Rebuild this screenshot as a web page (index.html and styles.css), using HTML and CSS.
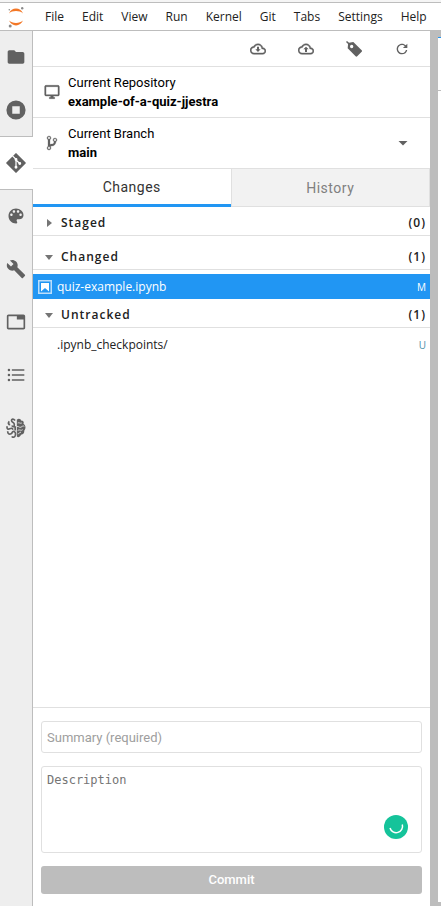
FILE: index.html
```html
<!DOCTYPE html>
<html lang="en">
<head>
<meta charset="utf-8">
<meta name="viewport" content="width=device-width, initial-scale=1">
<title>JupyterLab</title>
<link rel="stylesheet" href="styles.css">
</head>
<body>
<header class="menubar">
  <svg class="logo" viewBox="0 0 18 22" aria-hidden="true">
    <path fill="#f37726" d="M2 7.400C3.300 4.300 6 2.500 9 2.500s5.700 1.800 7 4.900C14.300 5.800 11.800 5 9 5s-5.300.8-7 2.400zM2 14.600C3.300 17.700 6 19.500 9 19.500s5.700-1.800 7-4.900c-1.700 1.600-4.200 2.400-7 2.400s-5.300-.8-7-2.400z"/>
    <g fill="#8a8a8a"><circle cx="15.200" cy="2.300" r="1.200"/><circle cx="2.300" cy="3.700" r="0.800"/><circle cx="3.200" cy="20" r="1.500"/></g>
  </svg>
  <nav class="menus" aria-label="Main menu">
    <button>File</button><button>Edit</button><button>View</button><button>Run</button><button>Kernel</button><button>Git</button><button>Tabs</button><button>Settings</button><button>Help</button>
  </nav>
</header>
<div class="workspace">
  <aside class="rail" aria-label="Side bar">
    <button class="rail-tab" aria-label="File browser"><svg viewBox="0 0 24 24"><path d="M10 4H4c-1.100 0-1.990.9-1.990 2L2 18c0 1.100.9 2 2 2h16c1.100 0 2-.9 2-2V8c0-1.100-.9-2-2-2h-8l-2-2z"/></svg></button>
    <button class="rail-tab" aria-label="Running sessions"><svg viewBox="0 0 24 24"><path fill-rule="evenodd" d="M12 0.500a11.500 11.500 0 1 0 0 23 11.500 11.500 0 0 0 0-23zM7.500 7.500h9v9h-9z"/></svg></button>
    <button class="rail-tab active" aria-label="Git"><svg viewBox="0 0 24 24"><path d="M12 1.200 22.800 12 12 22.800 1.200 12z" stroke="#616161" stroke-width="2" stroke-linejoin="round"/><g class="cut"><path d="M7.800 3.500 12 7.500V17M12 8.500l4.500 4"/><circle cx="12" cy="7.800" r="1"/><circle cx="12" cy="17" r="1"/><circle cx="16.500" cy="12.500" r="1"/></g></svg></button>
    <button class="rail-tab" aria-label="Commands"><svg viewBox="0 0 24 24"><path d="M12 3c-4.970 0-9 4.030-9 9s4.030 9 9 9c.83 0 1.500-.67 1.500-1.500 0-.39-.15-.74-.39-1.010-.23-.26-.38-.61-.38-.99 0-.83.67-1.500 1.500-1.500H16c2.760 0 5-2.240 5-5 0-4.420-4.030-8-9-8zm-5.500 9c-.83 0-1.500-.67-1.500-1.500S5.670 9 6.500 9 8 9.670 8 10.500 7.330 12 6.500 12zm3-4C8.670 8 8 7.330 8 6.500S8.670 5 9.500 5s1.500.67 1.500 1.500S10.330 8 9.500 8zm5 0c-.83 0-1.500-.67-1.500-1.500S13.670 5 14.500 5s1.500.67 1.500 1.500S15.330 8 14.500 8zm3 4c-.83 0-1.500-.67-1.500-1.500S16.670 9 17.500 9s1.500.67 1.500 1.500-.67 1.500-1.500 1.500z"/></svg></button>
    <button class="rail-tab" aria-label="Property inspector"><svg viewBox="0 0 24 24"><path d="M22.700 19l-9.100-9.100c.9-2.300.4-5-1.500-6.900-2-2-5-2.400-7.400-1.300L9 6 6 9 1.600 4.700C.4 7.100.9 10.100 2.900 12.100c1.900 1.900 4.600 2.400 6.900 1.500l9.100 9.100c.4.4 1 .4 1.400 0l2.300-2.300c.5-.4.5-1.100.1-1.400z"/></svg></button>
    <button class="rail-tab" aria-label="Open tabs"><svg viewBox="0 0 24 24"><path d="M21 3H3c-1.100 0-2 .9-2 2v14c0 1.100.9 2 2 2h18c1.100 0 2-.9 2-2V5c0-1.100-.9-2-2-2zm0 16H3V5h10v4h8v10z"/></svg></button>
    <button class="rail-tab" aria-label="Table of contents"><svg viewBox="0 0 24 24"><path d="M7 5h15v2H7zM7 11h15v2H7zM7 17h15v2H7z"/><circle cx="3.500" cy="6" r="1.500"/><circle cx="3.500" cy="12" r="1.500"/><circle cx="3.500" cy="18" r="1.500"/></svg></button>
    <button class="rail-tab" aria-label="Extension"><svg viewBox="0 0 24 24"><path d="M13 2c2-2 5-1 5 1 3 0 4 2 3 4 3 2 3 6 1 8 0 3-1 5-4 5-1 3-4 4-5 2z"/><g class="fold"><path d="M11 3C8 0 6 2 7 4s3 1 3 4-2 3-3 1M4 4C2 6 3 8 5 8M1.500 10c-1 3 1 4 3 3s3-1 4 1M2 16c0 3 2 4 4 3s1-3 3-3 3 3 2 5M7 22c1 2 4 1 4-1M11 10v5"/></g><g class="crease"><path d="M14 6c2-1 3 1 5 0M13 10c3 0 3 2 5 1s2-2 4-1M14 15c2-2 4 1 6-1M14 19c2 0 2-2 4-2"/></g></svg></button>
  </aside>
  <main class="git-panel">
    <div class="toolbar">
      <button aria-label="Pull latest changes"><svg viewBox="0 0 24 24"><path class="bold" d="M19.350 10.040C18.670 6.590 15.640 4 12 4 9.110 4 6.600 5.640 5.350 8.040 2.340 8.360 0 10.910 0 14c0 3.310 2.690 6 6 6h13c2.760 0 5-2.240 5-5 0-2.640-2.050-4.780-4.650-4.960zM19 18H6c-2.210 0-4-1.790-4-4 0-2.050 1.530-3.760 3.560-3.970l1.070-.11.5-.95C8.080 7.140 9.940 6 12 6c2.620 0 4.880 1.860 5.390 4.430l.3 1.500 1.530.11c1.560.1 2.780 1.410 2.780 2.960 0 1.650-1.350 3-3 3z"/><path d="M10.500 8.500h3v4H16l-4 4-4-4h2.500z"/></svg></button>
      <button aria-label="Push committed changes"><svg viewBox="0 0 24 24"><path class="bold" d="M19.350 10.040C18.670 6.590 15.640 4 12 4 9.110 4 6.600 5.640 5.350 8.040 2.340 8.360 0 10.910 0 14c0 3.310 2.690 6 6 6h13c2.760 0 5-2.240 5-5 0-2.640-2.050-4.780-4.650-4.960zM19 18H6c-2.210 0-4-1.790-4-4 0-2.050 1.530-3.760 3.560-3.970l1.070-.11.5-.95C8.080 7.140 9.940 6 12 6c2.620 0 4.880 1.860 5.390 4.430l.3 1.500 1.530.11c1.560.1 2.780 1.410 2.780 2.960 0 1.650-1.350 3-3 3z"/><path d="M10.500 16.500h3v-4H16l-4-4-4 4h2.500z"/></svg></button>
      <button aria-label="Checkout a tag"><svg viewBox="0 0 24 24"><path fill-rule="evenodd" d="M1.500 0 4.500 2.500 11 1.500 23.500 13.800c.7.7.7 1.700 0 2.400L16.800 23c-.7.7-1.700.7-2.400 0L2.500 11l.6-6.500L0 1.500zM8.500 5.800a2.500 2.500 0 1 0 0 5 2.500 2.500 0 0 0 0-5z"/></svg></button>
      <button aria-label="Refresh"><svg viewBox="0 0 18 18"><path d="M9 13.500c-2.490 0-4.500-2.010-4.500-4.500S6.510 4.500 9 4.500c1.240 0 2.360.52 3.170 1.330L10 8h5V3l-1.760 1.760C12.150 3.680 10.660 3 9 3 5.690 3 3.010 5.690 3.010 9S5.690 15 9 15c2.970 0 5.430-2.160 5.900-5h-1.520c-.46 2-2.240 3.500-4.380 3.500z"/></svg></button>
    </div>
    <section class="context">
      <svg viewBox="0 0 24 24" aria-hidden="true"><path class="bold" d="M21 2H3c-1.100 0-2 .9-2 2v12c0 1.100.9 2 2 2h7v2H8v2h8v-2h-2v-2h7c1.100 0 2-.9 2-2V4c0-1.100-.9-2-2-2zm0 14H3V4h18v12z"/></svg>
      <span class="context-text"><span>Current Repository</span><strong>example-of-a-quiz-jjestra</strong></span>
    </section>
    <button class="context">
      <svg viewBox="-3 0 16 16" aria-hidden="true"><path class="thin" fill-rule="evenodd" d="M10 5c0-1.110-.89-2-2-2a1.993 1.993 0 00-1 3.720v.3c-.02.52-.23.98-.63 1.380-.4.4-.86.61-1.380.63-.83.02-1.480.16-2 .45V4.720a1.993 1.993 0 00-1-3.720C.88 1 0 1.890 0 3a2 2 0 001 1.720v6.560c-.59.35-1 .99-1 1.720 0 1.110.89 2 2 2 1.110 0 2-.89 2-2 0-.53-.2-1-.53-1.360.09-.06.48-.41.59-.47.25-.11.56-.17.94-.17 1.050-.05 1.950-.45 2.750-1.250S8.950 7.770 9 6.730h-.02C9.590 6.370 10 5.730 10 5zM2 1.800c.66 0 1.200.55 1.200 1.200 0 .65-.55 1.200-1.200 1.200C1.350 4.200.8 3.650.8 3c0-.65.55-1.200 1.200-1.200zm0 12.410c-.66 0-1.200-.55-1.200-1.200 0-.65.55-1.200 1.200-1.200.65 0 1.200.55 1.200 1.200 0 .65-.55 1.200-1.200 1.200zm6-8c-.66 0-1.200-.55-1.200-1.200 0-.65.55-1.200 1.200-1.200.65 0 1.200.55 1.200 1.200 0 .65-.55 1.200-1.200 1.200z"/></svg>
      <span class="context-text"><span>Current Branch</span><strong>main</strong></span>
      <svg class="caret" viewBox="0 0 18 18" aria-hidden="true"><path d="M4.500 7h9L9 11.500z"/></svg>
    </button>
    <div class="tabs" role="tablist">
      <button class="tab selected" role="tab" aria-selected="true">Changes</button>
      <button class="tab" role="tab" aria-selected="false">History</button>
    </div>
    <div class="changes">
      <section class="group">
        <button class="group-head" aria-expanded="false"><svg viewBox="0 0 16 16"><path d="M6 4v8l5-4z"/></svg><span class="group-name">Staged</span><span>(0)</span></button>
      </section>
      <section class="group">
        <button class="group-head" aria-expanded="true"><svg viewBox="0 0 16 16"><path d="M4 6h8l-4 5z"/></svg><span class="group-name">Changed</span><span>(1)</span></button>
        <div class="file chosen"><svg viewBox="0 0 14 14" aria-hidden="true"><path fill="#bbdefb" fill-rule="evenodd" d="M0 0h14v14H0zM1.500 1.500v11h11v-11z"/><path fill="#fff" d="M3 3h8v8.500L7 8l-4 3.500z"/></svg><span class="file-name">quiz-example.ipynb</span><span class="status">M</span></div>
      </section>
      <section class="group">
        <button class="group-head" aria-expanded="true"><svg viewBox="0 0 16 16"><path d="M4 6h8l-4 5z"/></svg><span class="group-name">Untracked</span><span>(1)</span></button>
        <div class="file"><span class="file-name">.ipynb_checkpoints/</span><span class="status">U</span></div>
      </section>
    </div>
    <form class="commit">
      <input type="text" placeholder="Summary (required)" aria-label="Summary">
      <div class="description">
        <textarea placeholder="Description" aria-label="Description"></textarea>
        <svg class="badge" viewBox="0 0 24 24" aria-hidden="true"><circle cx="12" cy="12" r="12" fill="#15c39a"/><path d="M6 13a6.300 6.300 0 1 0 12.300-3.500" fill="none" stroke="#fff" stroke-width="1.500"/></svg>
      </div>
      <button type="button" disabled>Commit</button>
    </form>
  </main>
  <div class="splitter"></div>
  <div class="dock"><div class="dock-tabs"></div><div class="dock-content"></div></div>
</div>
</body>
</html>
```
FILE: styles.css
```css
* { box-sizing: border-box; }
body {
  display: flex;
  flex-direction: column;
  height: 100vh;
  margin: 0;
  overflow: hidden;
  background: #fff;
  color: #212121;
  font: 12px/16px "Open Sans", sans-serif;
}
button {
  margin: 0;
  padding: 0;
  border: 0;
  background: none;
  color: inherit;
  font: inherit;
}
svg { display: block; flex: none; fill: #616161; }

.menubar {
  display: flex;
  flex: none;
  height: 31px;
  border-bottom: 1px solid #bdbdbd;
  box-shadow: inset 0 2px #f5f5f5, inset 0 3px #bdbdbd;
}
.logo { width: 18px; height: 22px; margin: 6px 11px 0 7px; }
.menus { display: flex; padding-top: 4px; }
.menus button { padding: 0 9px; }

.workspace { display: flex; flex: 1; min-height: 0; }
.rail {
  display: flex;
  flex: none;
  flex-direction: column;
  width: 33px;
  background: #eee;
  border-right: 1px solid #bdbdbd;
}
.rail-tab {
  display: flex;
  align-items: center;
  justify-content: center;
  height: 53px;
  padding-bottom: 1px;
}
.rail-tab svg { width: 20px; height: 20px; }
.rail-tab.active {
  margin-right: -1px;
  padding-right: 1px;
  background: #fff;
  box-shadow: 0 -1px #bdbdbd, inset 0 -1px #bdbdbd;
}
.cut { fill: #fff; stroke: #fff; stroke-width: 1.5; }
.cut path { fill: none; }
.fold { fill: none; stroke: #616161; stroke-width: 2; }
.crease { fill: none; stroke: #eee; stroke-width: 1; }
.bold { stroke: #616161; stroke-width: 0.6; }
.thin { stroke: #616161; stroke-width: 0.3; }

.git-panel { display: flex; flex: 1; flex-direction: column; min-width: 0; }
.toolbar {
  display: flex;
  flex: none;
  justify-content: flex-end;
  gap: 30px;
  height: 36px;
  padding-right: 19px;
  border-bottom: 1px solid #e0e0e0;
}
.toolbar button { display: flex; align-items: center; justify-content: center; width: 18px; }
.toolbar svg { width: 16px; height: 16px; }
.context {
  display: flex;
  flex: none;
  align-items: center;
  gap: 8px;
  height: 51px;
  padding: 0 18px 0 11px;
  border-bottom: 1px solid #e0e0e0;
  color: #000;
  font: 13px/19px Roboto, sans-serif;
  text-align: left;
}
.context svg { width: 16px; height: 16px; }
.context-text { display: flex; flex: 1; flex-direction: column; }
.context .caret { width: 18px; height: 18px; }

.tabs { display: flex; flex: none; height: 38px; }
.tab {
  flex: 1;
  border: solid #e0e0e0;
  border-width: 0 1px 1px;
  background: #f2f2f2;
  color: #808080;
  font: 14px/20px Roboto, sans-serif;
  letter-spacing: 0.5px;
}
.tab.selected {
  border: 0;
  border-bottom: 3px solid #2196f3;
  background: #fff;
  color: #333;
}

.changes { flex: 1; overflow: auto; }
.group-head {
  display: flex;
  align-items: center;
  width: 100%;
  height: 29px;
  padding: 3px 4px 0 8px;
  border-bottom: 1px solid #e0e0e0;
  font-weight: 600;
  letter-spacing: 1px;
  text-align: left;
}
.group-head svg { width: 16px; height: 16px; margin-right: 4px; fill: #757575; }
.group-name { flex: 1; }
.group:nth-child(2) { padding-top: 5px; }
.group .file { margin-top: 4px; }
.file {
  display: flex;
  align-items: center;
  height: 25px;
  padding: 0 4px 0 24px;
}
.file.chosen { padding-left: 5px; background: #2196f3; color: #fff; }
.file svg { width: 14px; height: 14px; margin-right: 5px; }
.file-name { flex: 1; }
.status { font-size: 10px; color: #4a8fa8; }
.chosen .status { color: #fff; }

.commit {
  display: flex;
  flex: none;
  flex-direction: column;
  gap: 13px;
  padding: 13px 8px 12px;
  border-top: 1px solid #e0e0e0;
}
.commit input, .commit textarea {
  display: block;
  width: 100%;
  height: 32px;
  margin: 0;
  padding: 0 5px;
  border: 1px solid #e0e0e0;
  border-radius: 3px;
  background: #fff;
  font: 13px/16px Roboto, sans-serif;
  outline: 0;
}
.commit input::placeholder { color: #9e9e9e; }
.commit textarea { height: 87px; padding: 5px; resize: none; font: 12px/16px "DejaVu Sans Mono", monospace; }
.commit textarea::placeholder { color: #757575; }
.description { position: relative; }
.badge { position: absolute; right: 14px; bottom: 14px; width: 24px; height: 24px; }
.commit button {
  height: 28px;
  border-radius: 3px;
  background: #bdbdbd;
  color: #fff;
  font: 500 13px/16px Roboto, sans-serif;
}

.splitter { flex: none; width: 8px; background: #bdbdbd; }
.dock { display: flex; flex: none; flex-direction: column; width: 3px; padding: 6px 0 4px; background: #bdbdbd; }
.dock-tabs { height: 54px; border-top: 1px solid #2196f3; border-bottom: 1px solid #bdbdbd; background: #fff; }
.dock-content { flex: 1; background: #fff; }
```
